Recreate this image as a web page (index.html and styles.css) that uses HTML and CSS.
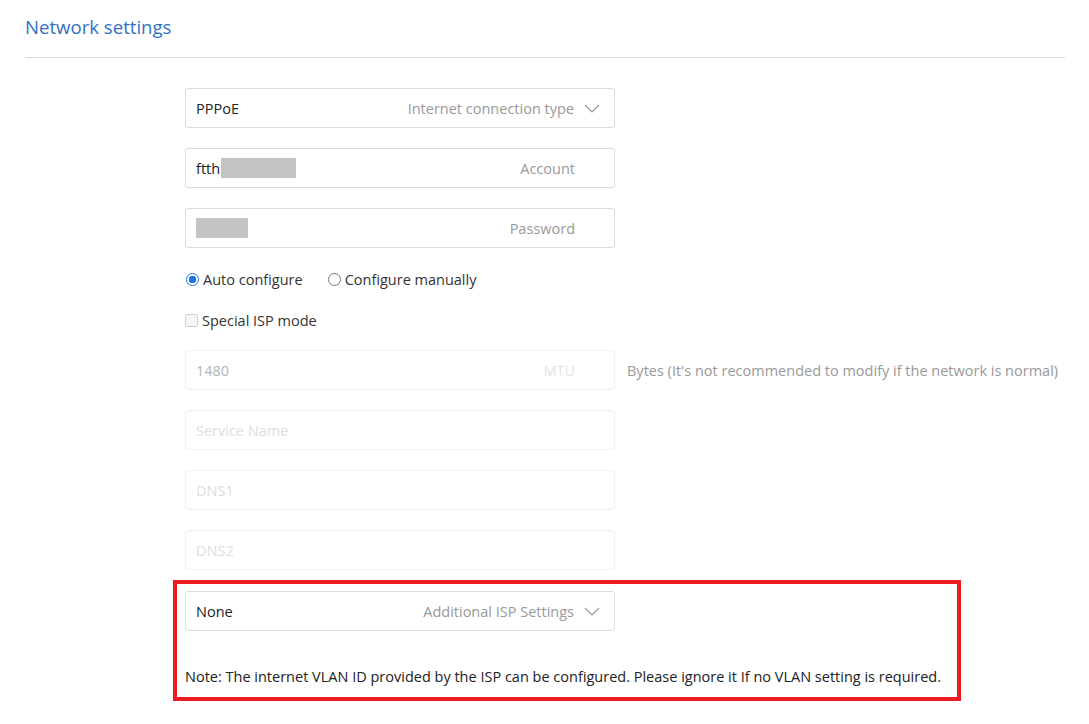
FILE: index.html
```html
<!DOCTYPE html>
<html lang="en">
<head>
<meta charset="utf-8">
<title>Network settings</title>
<link rel="stylesheet" href="styles.css">
</head>
<body>
<div class="page">
  <header class="page-head">
    <h1 class="page-title">Network settings</h1>
  </header>

  <form class="form">
    <div class="field">
      <span class="value">PPPoE</span>
      <span class="label">Internet connection type</span>
      <svg class="chevron" width="16" height="9" viewBox="0 0 16 9"><polyline points="1,1 8,8 15,1" fill="none" stroke="#999" stroke-width="1.2"/></svg>
    </div>

    <div class="field">
      <span class="value">ftth</span><span class="mask mask-account"></span>
      <span class="label label-plain">Account</span>
    </div>

    <div class="field">
      <span class="mask mask-password"></span>
      <span class="label label-plain">Password</span>
    </div>

    <div class="option-row">
      <label class="option"><span class="radio radio-on"></span>Auto configure</label>
      <label class="option"><span class="radio"></span>Configure manually</label>
    </div>

    <div class="option-row option-check">
      <label class="option"><span class="checkbox"></span>Special ISP mode</label>
    </div>

    <div class="field-line">
      <div class="field field-disabled">
        <span class="value value-disabled">1480</span>
        <span class="label label-plain label-disabled">MTU</span>
      </div>
      <span class="hint">Bytes (It's not recommended to modify if the network is normal)</span>
    </div>

    <div class="field field-disabled"><span class="placeholder">Service Name</span></div>
    <div class="field field-disabled"><span class="placeholder">DNS1</span></div>
    <div class="field field-disabled"><span class="placeholder">DNS2</span></div>

    <div class="highlight">
      <div class="field">
        <span class="value">None</span>
        <span class="label">Additional ISP Settings</span>
        <svg class="chevron" width="16" height="9" viewBox="0 0 16 9"><polyline points="1,1 8,8 15,1" fill="none" stroke="#999" stroke-width="1.2"/></svg>
      </div>
      <p class="note">Note: The internet VLAN ID provided by the ISP can be configured. Please ignore it If no VLAN setting is required.</p>
    </div>
  </form>
</div>
</body>
</html>
```

FILE: styles.css
```css
* { box-sizing: border-box; }

html, body {
  margin: 0;
  padding: 0;
  background: #fff;
}

body {
  font-family: "Open Sans", "Noto Sans", "Liberation Sans", sans-serif;
  font-size: 14.5px;
  color: #333;
}

.page {
  padding: 0 24px 0 25px;
}

.page-head {
  height: 58px;
  border-bottom: 1px solid #dcdcdc;
  display: flex;
  align-items: center;
  padding-bottom: 5px;
}

.page-title {
  margin: 0;
  font-size: 18.6px;
  font-weight: 400;
  color: #3471c4;
}

.form {
  margin-left: 160px;
  padding-top: 30px;
  display: flex;
  flex-direction: column;
}

.field {
  width: 430px;
  height: 40px;
  border: 1px solid #dcdcdc;
  border-radius: 3px;
  display: flex;
  align-items: center;
  padding: 0 14px 0 10px;
  margin-bottom: 20px;
}

.value { color: #222; }

.label {
  margin-left: auto;
  color: #999;
}

.label-plain { margin-right: 25px; }

.chevron { margin-left: 10px; }

.mask {
  display: inline-block;
  height: 20px;
  background: #c3c3c3;
}

.mask-account { width: 75px; margin-left: 1px; }
.mask-password { width: 52px; }

.option-row {
  height: 20px;
  display: flex;
  align-items: center;
  gap: 24px;
  margin-top: 1px;
  margin-bottom: 20px;
}

.option-check { margin-top: 1px; margin-bottom: 20px; }

.option {
  display: flex;
  align-items: center;
  color: #333;
}

.radio {
  width: 13px;
  height: 13px;
  border: 1px solid #767676;
  border-radius: 50%;
  margin: 0 4px 0 1px;
  background: #fff;
}

.radio-on {
  border-color: #1a73e8;
  background: radial-gradient(circle, #1a73e8 0 3.5px, #fff 4px);
}

.checkbox {
  width: 13px;
  height: 13px;
  border: 1px solid #d0d0d0;
  border-radius: 2px;
  background: #f6f6f6;
  margin: 0 4px 0 0;
}

.field-line {
  display: flex;
  align-items: center;
  margin-bottom: 20px;
}

.field-line .field { margin-bottom: 0; }

.hint {
  margin-left: 12px;
  color: #999;
  white-space: nowrap;
}

.field-disabled { border-color: #efefef; }

.value-disabled { color: #b4b4b4; }
.label-disabled { color: #e4e4e4; }
.placeholder { color: #dedede; }

.highlight {
  width: 788px;
  margin-left: -12px;
  margin-top: -10px;
  border: 4px solid #ed1c24;
  padding: 7px 8px 0;
}

.highlight .field { margin-bottom: 0; }

.note {
  margin: 36px 0 10px;
  line-height: 20px;
  color: #222;
  white-space: nowrap;
}
```
